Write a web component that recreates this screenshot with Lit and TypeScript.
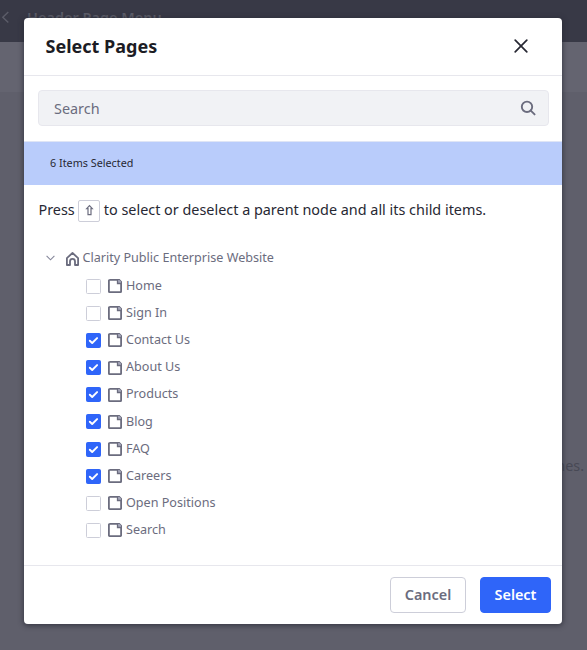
import { LitElement, html, css } from "lit";
import { customElement, property } from "lit/decorators.js";

interface PageItem {
  name: string;
  checked: boolean;
}

const PAGES: PageItem[] = [
  { name: "Home", checked: false },
  { name: "Sign In", checked: false },
  { name: "Contact Us", checked: true },
  { name: "About Us", checked: true },
  { name: "Products", checked: true },
  { name: "Blog", checked: true },
  { name: "FAQ", checked: true },
  { name: "Careers", checked: true },
  { name: "Open Positions", checked: false },
  { name: "Search", checked: false },
];

@customElement("page-row")
export class PageRow extends LitElement {
  @property() name = "";
  @property({ type: Boolean }) checked = false;

  static styles = css`
    :host {
      display: flex;
      align-items: center;
      height: 27.15px;
      font-size: 12.6px;
      color: #6b6c7e;
    }
    .box {
      box-sizing: border-box;
      width: 15px;
      height: 15px;
      border: 1px solid #cdced9;
      border-radius: 1.5px;
      background: #fff;
      display: flex;
      margin: 1.2px 7px 0 0;
    }
    .box.on {
      border-color: #2f65f9;
      background: #2f65f9;
    }
    .doc {
      width: 14px;
      height: 14px;
      flex: none;
      margin: 1.2px 4px 0 0;
    }
    .name {
      line-height: 18px;
      margin-top: 0.7px;
      white-space: nowrap;
    }
  `;

  render() {
    return html`
      <span class="box ${this.checked ? "on" : ""}">
        ${this.checked
          ? html`<svg width="13" height="13" viewBox="0 0 13 13">
              <path d="M2.8 6.7 5.2 9 10.1 4.1" fill="none" stroke="#fff" stroke-width="1.9" stroke-linecap="round" stroke-linejoin="round" />
            </svg>`
          : ""}
      </span>
      <svg class="doc" viewBox="0 0 14 14">
        <path d="M1.4.9H11.2L13.1 2.8v9.7a.6.6 0 0 1-.6.6H1.5a.6.6 0 0 1-.6-.6V1.5a.6.6 0 0 1 .6-.6Z" fill="none" stroke="#6b6c7e" stroke-width="1.8" />
        <path d="M9.6 1v3.4H13V2.6L11.4 1Z" fill="#a7a9bc" />
        <path d="M9.5 1v3.5H13" fill="none" stroke="#6b6c7e" stroke-width="1.3" />
      </svg>
      <span class="name">${this.name}</span>
    `;
  }
}

@customElement("app-root")
export class AppRoot extends LitElement {
  static styles = css`
    :host {
      display: block;
      position: relative;
      height: 650px;
      overflow: hidden;
      background: #5f5f6b;
      font-family: "Noto Sans", sans-serif;
      color: #272833;
    }
    .topbar {
      box-sizing: border-box;
      height: 42px;
      background: #383946;
      display: flex;
      padding: 7px 0 0 1px;
      color: #5c5d69;
      font-size: 14.5px;
      font-weight: 600;
      line-height: 20px;
    }
    .topbar svg {
      margin: 4px 17px 0 0;
    }
    .toolbar {
      height: 50px;
      background: #646470;
    }
    .behind {
      position: absolute;
      right: 3px;
      top: 456px;
      font-size: 14.4px;
      line-height: 20px;
      color: #484955;
    }
    .modal {
      position: absolute;
      left: 24px;
      top: 18px;
      width: 538px;
      height: 606px;
      display: flex;
      flex-direction: column;
      background: #fff;
      border-radius: 4px;
      overflow: hidden;
    }
    .shadow {
      position: absolute;
      left: 24px;
      top: 18px;
      width: 538px;
      height: 606px;
      border-radius: 4px;
      box-shadow: 0 1px 5px 1px rgba(39, 40, 51, 0.65);
    }
    header {
      box-sizing: border-box;
      height: 58px;
      border-bottom: 1px solid #e7e7ed;
      display: flex;
      align-items: center;
      justify-content: space-between;
      padding: 0 34px 2px 21.5px;
      flex: none;
    }
    h1 {
      margin: 0;
      font-size: 18px;
      font-weight: 700;
      line-height: 24px;
      color: #1c1c24;
    }
    .search {
      box-sizing: border-box;
      height: 36px;
      margin: 14px 13px 15px 14px;
      padding: 0 12px 0 15px;
      display: flex;
      align-items: center;
      justify-content: space-between;
      background: #f1f2f5;
      border: 1px solid #e7e7ed;
      border-radius: 4px;
      font-size: 14.4px;
      color: #6b6c7e;
      flex: none;
    }
    .count {
      box-sizing: border-box;
      height: 44px;
      border-top: 1px solid #dfe5f5;
      background: #b9ccfb;
      padding-left: 26px;
      line-height: 41px;
      font-size: 10.8px;
      flex: none;
    }
    .hint {
      display: flex;
      align-items: center;
      height: 22px;
      margin: 15px 0 0 14.5px;
      font-size: 14.4px;
      white-space: nowrap;
    }
    .hint .text {
      margin-top: -4px;
    }
    kbd {
      box-sizing: border-box;
      width: 22px;
      height: 22px;
      margin: 0 4px 0 3px;
      border: 1px solid #cdced9;
      border-radius: 2px;
      display: flex;
      align-items: center;
      justify-content: center;
    }
    kbd svg {
      margin-top: -2px;
    }
    .tree {
      flex: 1;
      padding: 22px 0 0 22px;
    }
    .root {
      display: flex;
      align-items: center;
      height: 28px;
      font-size: 12.6px;
      color: #6b6c7e;
    }
    .root .home {
      margin: 2px 3.5px 0 11px;
    }
    .root span {
      margin-top: -2px;
    }
    .children {
      padding-left: 40px;
    }
    footer {
      box-sizing: border-box;
      height: 59px;
      border-top: 1px solid #e7e7ed;
      display: flex;
      justify-content: flex-end;
      gap: 14px;
      padding: 11px 11px 0 0;
      flex: none;
    }
    button {
      box-sizing: border-box;
      height: 36px;
      padding: 0;
      border-radius: 4px;
      font: 600 14.4px/20px "Noto Sans", sans-serif;
    }
    .cancel {
      width: 76px;
      border: 1px solid #cdced9;
      background: #fff;
      color: #6b6c7e;
    }
    .select {
      width: 71px;
      border: 1px solid #2f65f9;
      background: #2f65f9;
      color: #fff;
    }
  `;

  render() {
    return html`
      <div class="topbar">
        <svg width="9" height="13" viewBox="0 0 9 13">
          <path d="M7.3 1 1.8 6.3 7.3 11.6" fill="none" stroke="#5c5d69" stroke-width="1.4" />
        </svg>
        <span>Header Page Menu</span>
      </div>
      <div class="toolbar"></div>
      <div class="behind">names.</div>
      <div class="shadow"></div>
      <div class="modal">
        <header>
          <h1>Select Pages</h1>
          <svg width="14" height="14" viewBox="0 0 14 14">
            <path d="M1.2 1.2 12.8 12.8M12.8 1.2 1.2 12.8" stroke="#272833" stroke-width="1.7" stroke-linecap="round" />
          </svg>
        </header>
        <div class="search">
          <span>Search</span>
          <svg width="16" height="16" viewBox="0 0 16 16" fill="none" stroke="#6b6c7e" stroke-width="1.9" stroke-linecap="round">
            <circle cx="7" cy="6.8" r="5.2" />
            <path d="M10.8 10.6 14.6 14.4" />
          </svg>
        </div>
        <div class="count">6 Items Selected</div>
        <div class="hint">
          <span class="text">Press</span>
          <kbd>
            <svg width="10" height="12" viewBox="0 0 10 12">
              <path d="M5.5 1.6 8.3 4.6H7v6H4v-6H2.7Z" fill="none" stroke="#6b6c7e" stroke-width="1.2" />
            </svg>
          </kbd>
          <span class="text">to select or deselect a parent node and all its child items.</span>
        </div>
        <div class="tree">
          <div class="root">
            <svg width="9" height="6" viewBox="0 0 9 6">
              <path d="M.6.8 4.5 4.8 8.4.8" fill="none" stroke="#85869a" stroke-width="1.1" />
            </svg>
            <svg class="home" width="13" height="14" viewBox="0 0 13 14">
              <path d="M.9 13V6.1L6.5 1l5.6 5.1V13H9V9.4a2.5 2.5 0 0 0-5 0V13Z" fill="none" stroke="#6b6c7e" stroke-width="1.8" stroke-linejoin="round" />
            </svg>
            <span>Clarity Public Enterprise Website</span>
          </div>
          <div class="children">
            ${PAGES.map((p) => html`<page-row .name=${p.name} .checked=${p.checked}></page-row>`)}
          </div>
        </div>
        <footer>
          <button class="cancel">Cancel</button>
          <button class="select">Select</button>
        </footer>
      </div>
    `;
  }
}
